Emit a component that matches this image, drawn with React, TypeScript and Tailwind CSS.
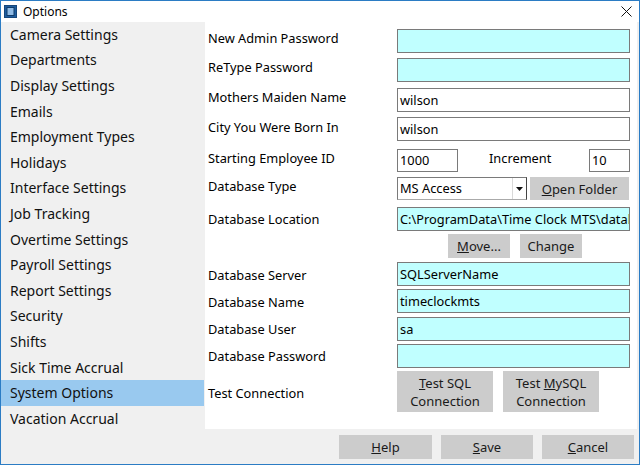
import React from "react";

const font = { fontFamily: '"Noto Sans", "Open Sans", Arial, sans-serif' };

const items = [
  "Camera Settings",
  "Departments",
  "Display Settings",
  "Emails",
  "Employment Types",
  "Holidays",
  "Interface Settings",
  "Job Tracking",
  "Overtime Settings",
  "Payroll Settings",
  "Report Settings",
  "Security",
  "Shifts",
  "Sick Time Accrual",
  "System Options",
  "Vacation Accrual",
];

function Field({ value = "", cyan = false, w = "w-[233px]" }: { value?: string; cyan?: boolean; w?: string }) {
  return (
    <div
      className={`${w} h-full border border-[#7a7a7a] ${cyan ? "bg-[#c0ffff]" : "bg-white"} flex items-center pl-[2px] overflow-hidden whitespace-nowrap text-[12.8px] text-black leading-none`}
    >
      {value}
    </div>
  );
}

function Btn({ children, w, h = "h-full" }: { children: React.ReactNode; w: string; h?: string }) {
  return (
    <div className={`${w} ${h} bg-[#cccccc] flex flex-col items-center justify-center text-[13px] leading-[18px] text-[#1a1a1a] text-center`}>
      {children}
    </div>
  );
}

function Row({ label, mt, h, lp = "", children }: { label: string; mt: string; h: string; lp?: string; children?: React.ReactNode }) {
  return (
    <div className={`flex ${mt} ${h}`}>
      <div className={`w-[192px] pl-[3px] flex items-center text-[12.8px] text-black whitespace-nowrap ${lp}`}>{label}</div>
      <div className="flex h-full">{children}</div>
    </div>
  );
}

export default function App() {
  return (
    <div style={font} className="w-[640px] h-[465px] border border-[#2b7cc4] bg-[#f0f0f0] flex flex-col overflow-hidden">
      {/* title bar */}
      <div className="h-[21px] bg-white flex items-center shrink-0">
        <svg width="13" height="13" viewBox="0 0 13 13" className="ml-[3px]">
          <rect x="0.5" y="0.5" width="12" height="12" fill="#1d5c9e" stroke="#16467a" />
          <rect x="3" y="2.5" width="7" height="8" fill="#8fbbe6" stroke="#0f3a68" strokeWidth="1" />
        </svg>
        <span className="ml-[6px] text-[12px] text-black">Options</span>
        <div className="flex-1" />
        <svg width="11" height="11" viewBox="0 0 11 11" className="mr-[7px]">
          <path d="M0.5 0.5 L10.5 10.5 M10.5 0.5 L0.5 10.5" stroke="#111" strokeWidth="1" />
        </svg>
      </div>
      <div className="flex flex-1">
        {/* list */}
        <div className="w-[203px] shrink-0 flex flex-col">
          {items.map((it) => (
            <div
              key={it}
              className={`h-[25.6px] shrink-0 flex items-center pl-[9px] pb-[1px] text-[14px] text-[#111] whitespace-nowrap ${it === "System Options" ? "bg-[#99c9ef]" : ""}`}
            >
              {it}
            </div>
          ))}
        </div>
        {/* right */}
        <div className="flex-1 flex flex-col ml-[1px] mr-[2px]">
          <div className="h-[407px] bg-white flex flex-col">
            <Row label="New Admin Password" mt="mt-[7px]" h="h-[24px]" lp="pb-[4px]">
              <Field cyan />
            </Row>
            <Row label="ReType Password" mt="mt-[5px]" h="h-[24px]" lp="pb-[4px]">
              <Field cyan />
            </Row>
            <Row label="Mothers Maiden Name" mt="mt-[6px]" h="h-[24px]" lp="pb-[4px]">
              <Field value="wilson" />
            </Row>
            <Row label="City You Were Born In" mt="mt-[5px]" h="h-[24px]" lp="pb-[2px]">
              <Field value="wilson" />
            </Row>
            <Row label="Starting Employee ID" mt="mt-[8px]" h="h-[23px]" lp="pb-[4px]">
              <Field value="1000" w="w-[61px]" />
              <div className="w-[131px] pl-[31px] flex items-center text-[12.8px] text-black pb-[4px]">Increment</div>
              <Field value="10" w="w-[41px]" />
            </Row>
            <Row label="Database Type" mt="mt-[5px]" h="h-[23px]" lp="pb-[4px]">
              <div className="w-[130px] h-full border border-[#7a7a7a] border-r-[#444] border-b-[#aaa] bg-white flex items-center text-[12.8px] text-black">
                <span className="pl-[2px] flex-1">MS Access</span>
                <div className="w-[14px] h-full border-l border-[#d9d9d9] flex items-center justify-center">
                  <svg width="7" height="4" viewBox="0 0 7 4">
                    <path d="M0 0 L7 0 L3.5 4 Z" fill="#111" />
                  </svg>
                </div>
              </div>
              <div className="ml-[3px]">
                <Btn w="w-[99px]" h="h-[23px]">
                  <span>
                    <span className="underline">O</span>pen Folder
                  </span>
                </Btn>
              </div>
            </Row>
            <Row label="Database Location" mt="mt-[7px]" h="h-[24px]" lp="pt-[2px]">
              <Field cyan value="C:\ProgramData\Time Clock MTS\datal" />
            </Row>
            <div className="flex mt-[3px] h-[24px] pl-[243px] gap-[10px]">
              <Btn w="w-[62px]">
                <span>
                  <span className="underline">M</span>ove...
                </span>
              </Btn>
              <Btn w="w-[62px]">Change</Btn>
            </div>
            <Row label="Database Server" mt="mt-[4px]" h="h-[24px]" lp="pt-[3px]">
              <Field cyan value="SQLServerName" />
            </Row>
            <Row label="Database Name" mt="mt-[3px]" h="h-[24px]" lp="pt-[3px]">
              <Field cyan value="timeclockmts" />
            </Row>
            <Row label="Database User" mt="mt-[4px]" h="h-[24px]" lp="pt-[2px]">
              <Field cyan value="sa" />
            </Row>
            <Row label="Database Password" mt="mt-[3px]" h="h-[24px]" lp="pt-[2px]">
              <Field cyan />
            </Row>
            <Row label="Test Connection" mt="mt-[3px]" h="h-[41px]" lp="pt-[4px]">
              <div className="flex gap-[10px] h-full">
                <Btn w="w-[96px]">
                  <span>
                    <span className="underline">T</span>est SQL
                  </span>
                  <span>Connection</span>
                </Btn>
                <Btn w="w-[96px]">
                  <span>
                    Test <span className="underline">M</span>ySQL
                  </span>
                  <span>Connection</span>
                </Btn>
              </div>
            </Row>
          </div>
          <div className="flex justify-end mt-[6px] mr-[3px] h-[24px] gap-[9px]">
            <Btn w="w-[93px]">
              <span>
                <span className="underline">H</span>elp
              </span>
            </Btn>
            <Btn w="w-[92px]">
              <span>
                <span className="underline">S</span>ave
              </span>
            </Btn>
            <Btn w="w-[92px]">
              <span>
                <span className="underline">C</span>ancel
              </span>
            </Btn>
          </div>
        </div>
      </div>
    </div>
  );
}
